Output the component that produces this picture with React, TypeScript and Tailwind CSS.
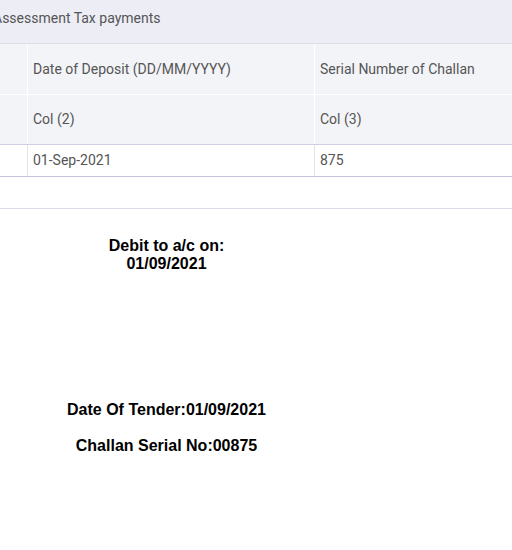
import React from "react";

export default function App() {
  const roboto = { fontFamily: "Roboto, 'Noto Sans', sans-serif" };
  const arial = { fontFamily: "'Liberation Sans', Arial, sans-serif" };
  return (
    <div className="w-[512px] h-[550px] overflow-hidden bg-white">
      <div className="w-[700px] text-[14px] text-[#555]" style={roboto}>
        <div className="h-[44px] bg-[#ededf6] border-b border-[#dcdcea] flex items-start pt-[8px]">
          <span className="-ml-[7px]">Assessment Tax payments</span>
        </div>
        <div className="grid grid-cols-[27px_286px_1fr] gap-x-px bg-white">
          <div className="h-[50px] bg-[#f3f4f8]" />
          <div className="h-[50px] bg-[#f3f4f8] flex items-center px-[5px]">Date of Deposit (DD/MM/YYYY)</div>
          <div className="h-[50px] bg-[#f3f4f8] flex items-center px-[5px]">Serial Number of Challan</div>
        </div>
        <div className="grid grid-cols-[27px_286px_1fr] gap-x-px bg-white mt-px border-b border-[#d0d0e4]">
          <div className="h-[49px] bg-[#f3f4f8]" />
          <div className="h-[49px] bg-[#f3f4f8] flex items-center px-[5px]">Col (2)</div>
          <div className="h-[49px] bg-[#f3f4f8] flex items-center px-[5px]">Col (3)</div>
        </div>
        <div className="grid grid-cols-[27px_286px_1fr] gap-x-px bg-[#e2e2ea] border-b border-[#c2c2dc]">
          <div className="h-[31px] bg-white" />
          <div className="h-[31px] bg-white flex items-center px-[5px] pb-[1px]">01-Sep-2021</div>
          <div className="h-[31px] bg-white flex items-center px-[5px] pb-[1px]">875</div>
        </div>
      </div>
      <div className="h-[31px]" />
      <div className="border-t border-[#dcdcea]" />
      <div className="w-[333px] text-black font-bold text-[16px] text-center" style={arial}>
        <div className="pt-[27px] leading-[19px]">
          <div>Debit to a/c on:</div>
          <div className="-mt-px">01/09/2021</div>
        </div>
        <div className="mt-[127px] leading-[19px]">Date Of Tender:01/09/2021</div>
        <div className="mt-[17px] leading-[19px]">Challan Serial No:00875</div>
      </div>
    </div>
  );
}
